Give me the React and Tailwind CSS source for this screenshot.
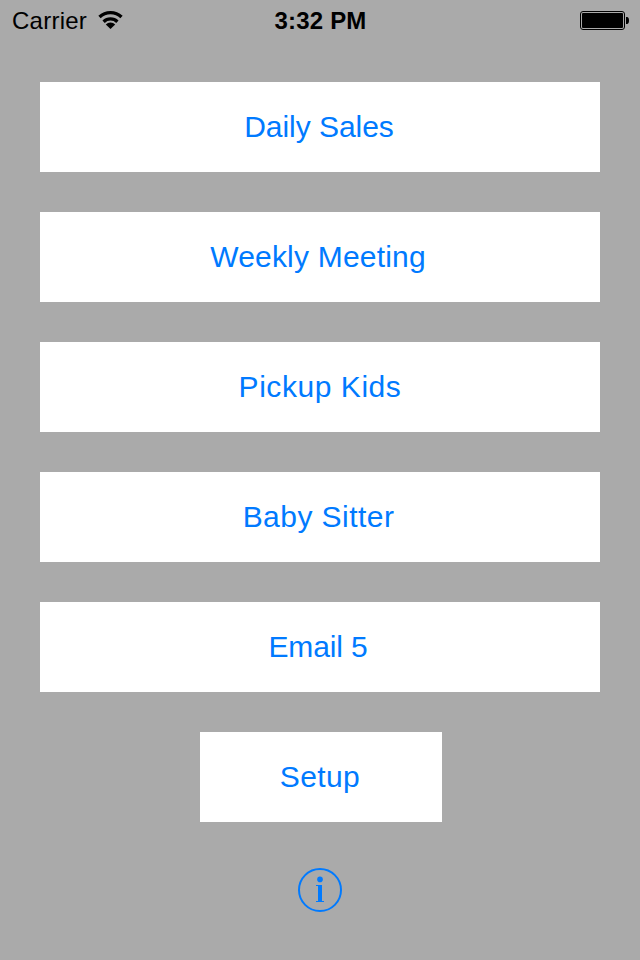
import React from "react";

const reminders = [
  { label: "Daily Sales", spacing: "tracking-[-0.05px] pr-0.5" },
  { label: "Weekly Meeting", spacing: "tracking-[0.2px] pr-1" },
  { label: "Pickup Kids", spacing: "tracking-[0.55px]" },
  { label: "Baby Sitter", spacing: "tracking-[0.45px] pr-[3px]" },
  { label: "Email 5", spacing: "tracking-[-0.15px] pr-1" },
];

function WifiIcon() {
  return (
    <svg width="26" height="20" viewBox="0 0 26 20" fill="none" stroke="#000" strokeWidth="3.3">
      <path d="M1.5 7a15.8 15.8 0 0 1 22 0" />
      <path d="M5.6 11.7a9.9 9.9 0 0 1 13.8 0" />
      <path d="M12.5 19l-4.7-4.5a6.6 6.6 0 0 1 9.4 0z" fill="#000" stroke="none" />
    </svg>
  );
}

function BatteryIcon() {
  return (
    <svg width="49" height="19" viewBox="0 0 49 19">
      <rect x="0.5" y="0.5" width="44" height="18" rx="2.5" fill="none" stroke="#000" />
      <rect x="2" y="2" width="41" height="15" rx="1" />
      <path d="M46 6h1c1.3 0 2 1.5 2 3.5s-.7 3.5-2 3.5h-1z" />
    </svg>
  );
}

function InfoIcon() {
  return (
    <svg width="44" height="44" viewBox="0 0 44 44" fill="none" stroke="#007aff">
      <circle cx="22" cy="22" r="21" strokeWidth="2" />
      <circle cx="22" cy="11.4" r="2.8" fill="#007aff" stroke="none" />
      <path d="M22 17v17" strokeWidth="4" />
      <path d="M18 17.5h4M18 33.5h8" strokeWidth="1" />
    </svg>
  );
}

function StatusBar() {
  return (
    <div className="grid h-10 grid-cols-3 items-center pl-3 pr-[11px] text-black">
      <div className="flex items-center gap-[11px]">
        <span className="pt-0.5 text-2xl tracking-[0.25px]">Carrier</span>
        <WifiIcon />
      </div>
      <span className="pt-0.5 text-center text-2xl font-bold tracking-[0.2px]">3:32 PM</span>
      <div className="flex justify-end">
        <BatteryIcon />
      </div>
    </div>
  );
}

export default function App() {
  return (
    <div className="flex h-[960px] w-[640px] flex-col bg-[#aaaaaa] font-['Liberation_Sans',Arial,sans-serif]">
      <StatusBar />

      <div className="mt-[42px] flex flex-col items-center gap-10">
        {reminders.map(({ label, spacing }) => (
          <button
            key={label}
            className={`h-[90px] w-[560px] bg-white pb-0.5 text-[30px] text-[#007aff] ${spacing}`}
          >
            {label}
          </button>
        ))}
        <button className="ml-0.5 h-[90px] w-[242px] bg-white pr-0.5 pb-0.5 text-[30px] tracking-[0.4px] text-[#007aff]">
          Setup
        </button>
      </div>

      <button className="mx-auto mt-[46px] h-11 w-11" aria-label="Info">
        <InfoIcon />
      </button>
    </div>
  );
}
